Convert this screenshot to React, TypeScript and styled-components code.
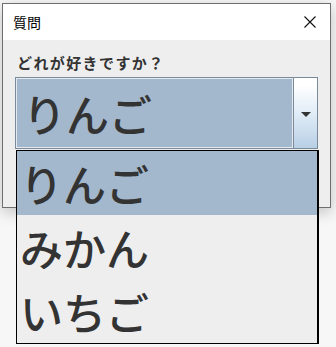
import React from 'react';
import styled, { createGlobalStyle } from 'styled-components';

const GlobalStyle = createGlobalStyle`
  html, body {
    margin: 0;
    padding: 0;
    background: #f7f7f7;
  }
  body {
    font-family: "Noto Sans CJK JP", "Noto Sans", sans-serif;
  }
`;

const Stage = styled.div`
  position: relative;
  width: 336px;
  height: 347px;
  padding: 3px 0 0 2px;
  box-sizing: border-box;
`;

const Window = styled.div`
  width: 329px;
  height: 205px;
  box-sizing: border-box;
  border: 1px solid #6e6e6e;
  background: #eeeeee;
  display: flex;
  flex-direction: column;
  box-shadow: 0 4px 14px rgba(0, 0, 0, 0.22);
`;

const TitleBar = styled.div`
  height: 36px;
  background: #ffffff;
  display: flex;
  align-items: center;
  justify-content: space-between;
  padding: 0 14px 0 10px;
`;

const Title = styled.span`
  font-size: 14px;
  color: #000;
  line-height: 1;
`;

const CloseIcon = styled.svg`
  width: 12px;
  height: 12px;
`;

const Body = styled.div`
  flex: 1;
  padding: 12px 12px 0 12px;
  display: flex;
  flex-direction: column;
  gap: 3px;
`;

const Question = styled.div`
  font-size: 15px;
  font-weight: 700;
  color: #333;
  line-height: 22px;
  padding-left: 2px;
  letter-spacing: 1.4px;
`;

const Combo = styled.div`
  height: 72px;
  width: 303px;
  box-sizing: border-box;
  border: 1px solid #7a8a99;
  display: flex;
`;

const ComboValue = styled.div`
  flex: 1;
  background: #a3b8cc;
  border: 1px solid #e4eaf0;
  display: flex;
  align-items: center;
  padding-left: 6px;
  font-size: 43px;
  font-weight: 500;
  color: #333;
`;

const ArrowButton = styled.div`
  width: 23px;
  border-left: 1px solid #7a8a99;
  background: linear-gradient(#ffffff 10%, #ddeaf6 55%, #b8cfe5);
  display: flex;
  align-items: center;
  justify-content: center;
`;

const Arrow = styled.div`
  width: 0;
  height: 0;
  border-left: 5px solid transparent;
  border-right: 5px solid transparent;
  border-top: 5px solid #333;
  margin-top: 2px;
`;

const Popup = styled.ul`
  position: absolute;
  left: 16px;
  top: 150px;
  width: 303px;
  height: 194px;
  box-sizing: border-box;
  margin: 0;
  padding: 0;
  list-style: none;
  border: 1px solid #000;
  border-width: 1px 2px 2px 1px;
  background: #eeeeee;
`;

const Item = styled.li<{ $selected?: boolean }>`
  height: 64px;
  display: flex;
  align-items: center;
  padding-left: 3px;
  font-size: 43px;
  font-weight: 500;
  color: #333;
  background: ${p => (p.$selected ? '#a3b8cc' : '#eeeeee')};
`;

const items = ['りんご', 'みかん', 'いちご'];

export default function App() {
  return (
    <>
      <GlobalStyle />
      <Stage>
        <Window>
          <TitleBar>
            <Title>質問</Title>
            <CloseIcon viewBox="0 0 12 12">
              <path d="M0.5 0.5 L11.5 11.5 M11.5 0.5 L0.5 11.5" stroke="#111" strokeWidth="1.1" fill="none" />
            </CloseIcon>
          </TitleBar>
          <Body>
            <Question>どれが好きですか？</Question>
            <Combo>
              <ComboValue>りんご</ComboValue>
              <ArrowButton>
                <Arrow />
              </ArrowButton>
            </Combo>
          </Body>
        </Window>
        <Popup>
          {items.map((it, i) => (
            <Item key={it} $selected={i === 0}>
              {it}
            </Item>
          ))}
        </Popup>
      </Stage>
    </>
  );
}
